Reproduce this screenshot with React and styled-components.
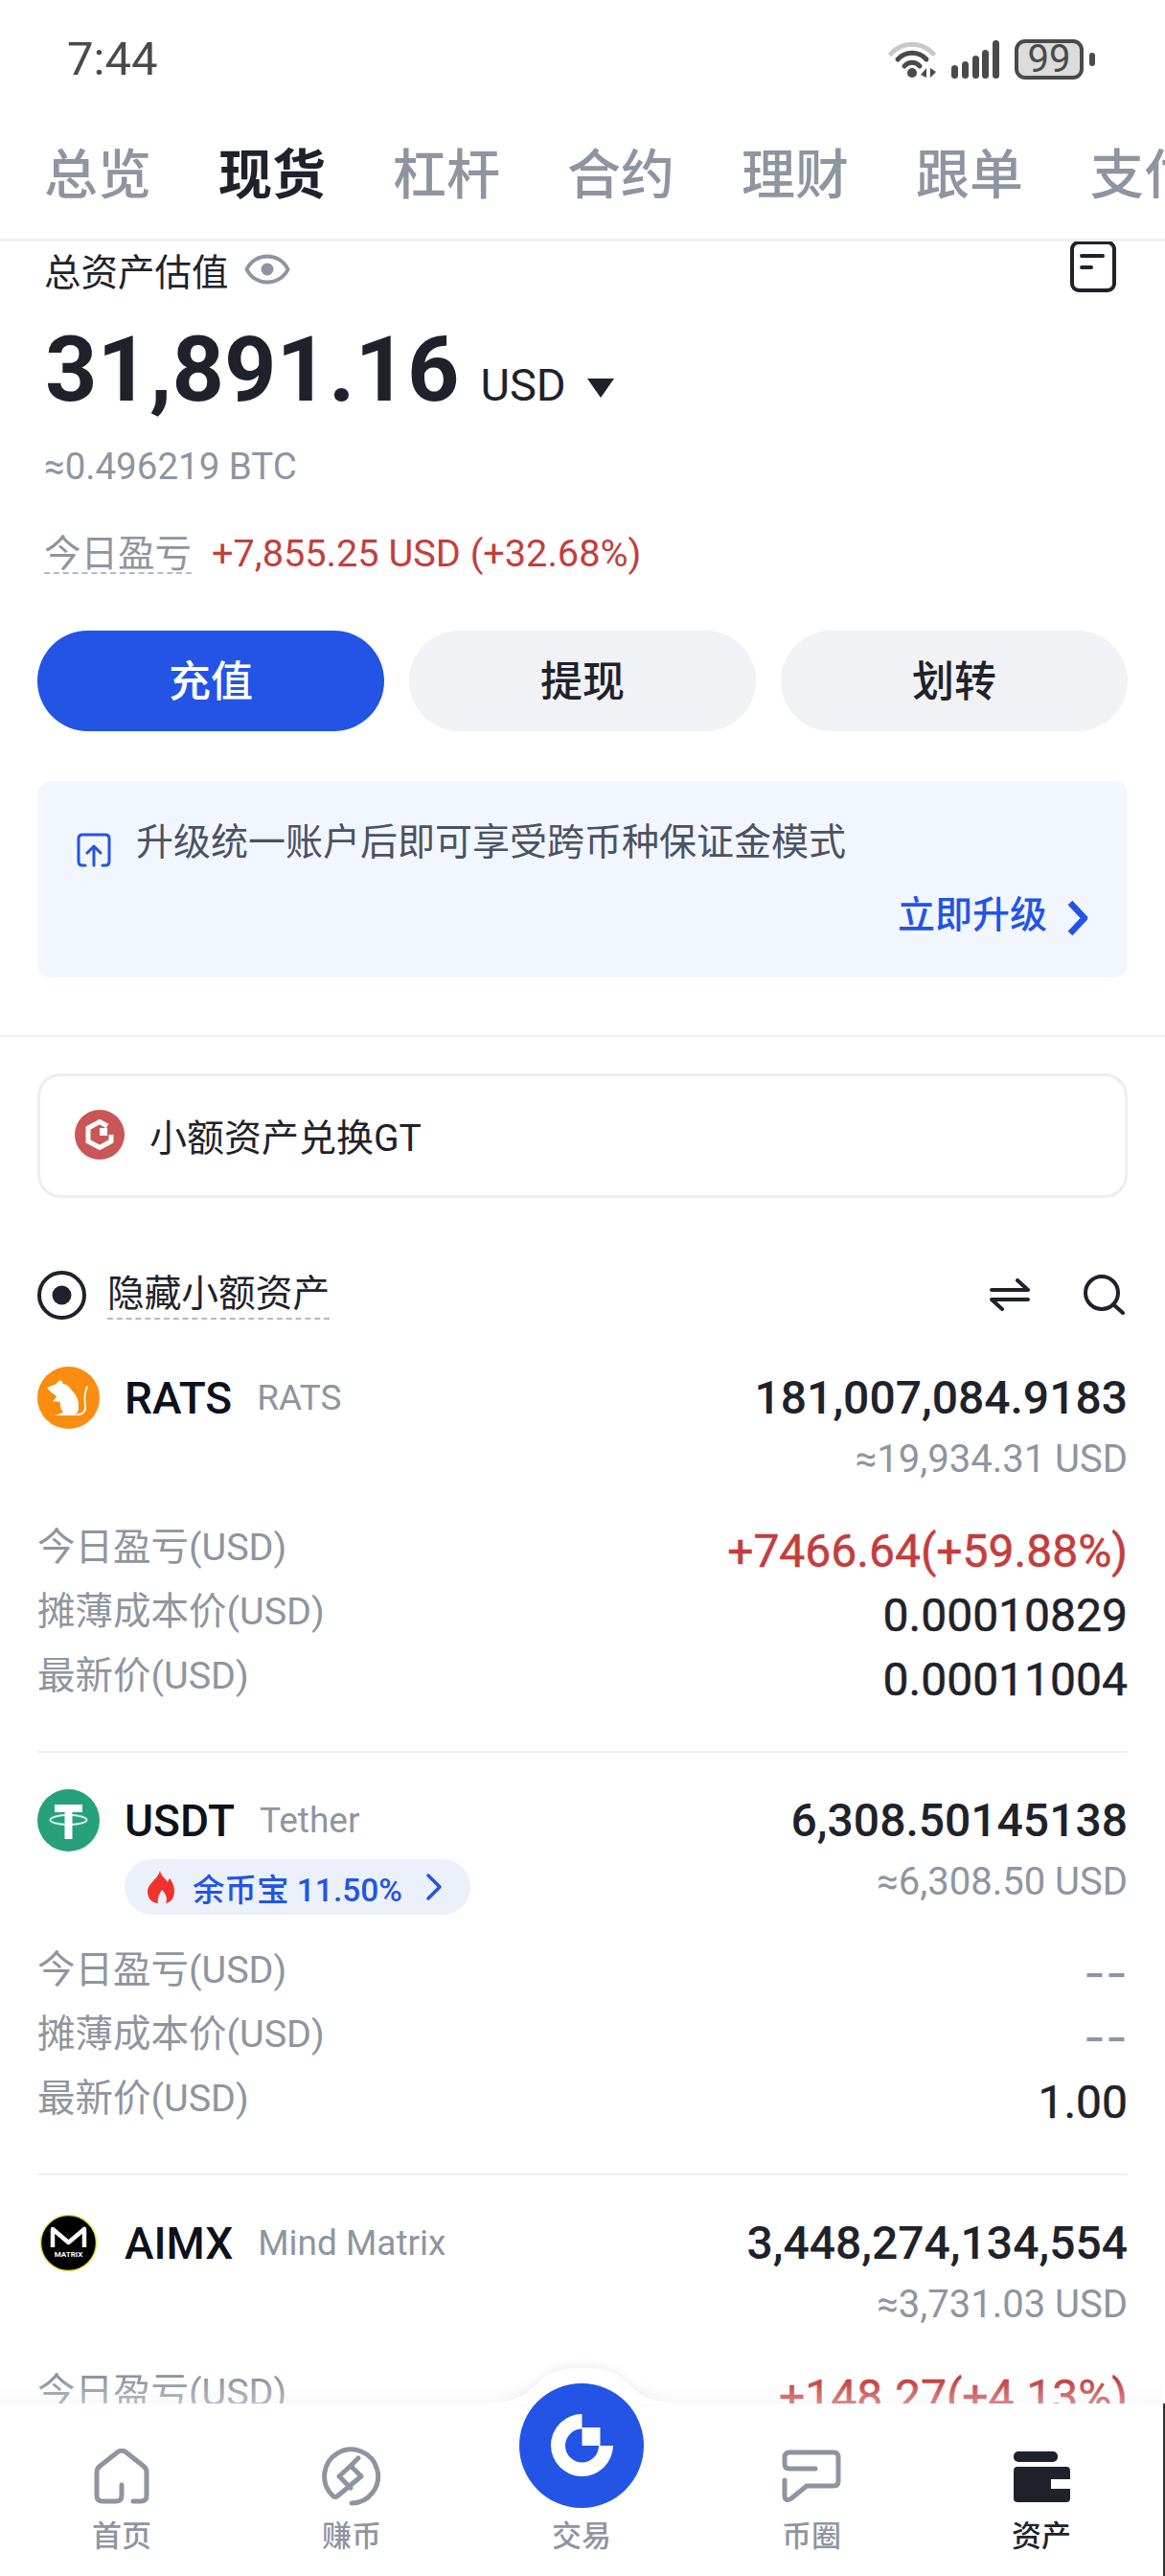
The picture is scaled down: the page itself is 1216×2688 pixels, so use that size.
import React from "react";
import styled, { createGlobalStyle } from "styled-components";

const GlobalStyle = createGlobalStyle`
  html, body { margin: 0; padding: 0; background: #fff; }
  * { box-sizing: border-box; }
  body {
    font-family: Roboto, "Noto Sans CJK SC", sans-serif;
  }
`;

const DARK = "#1f222b";
const GRAY = "#8e95a0";
const RED = "#c43d3d";
const BLUE = "#2354e6";

const Screen = styled.div`
  width: 1216px;
  height: 2688px;
  display: flex;
  flex-direction: column;
  overflow: hidden;
  background: #fff;
`;

const StatusBar = styled.div`
  height: 124px;
  flex-shrink: 0;
  display: flex;
  align-items: center;
  justify-content: space-between;
  padding: 0 85px 0 70px;
  color: #4a4a4a;
`;

const Time = styled.span`
  font-size: 49px;
  line-height: 60px;
`;

const StatusIcons = styled.div`
  display: flex;
  align-items: center;
  gap: 16px;
`;

const Battery = styled.div`
  width: 72px;
  height: 42px;
  border: 4px solid #4a4a4a;
  border-radius: 11px;
  background: #dcdcdc;
  display: flex;
  align-items: center;
  justify-content: center;
  font-size: 40px;
  line-height: 1;
  position: relative;
  &::after {
    content: "";
    position: absolute;
    right: -16px;
    top: 10px;
    width: 6px;
    height: 14px;
    border-radius: 3px;
    background: #4a4a4a;
  }
`;

const Tabs = styled.div`
  height: 128px;
  flex-shrink: 0;
  display: flex;
  gap: 70px;
  padding: 31px 0 0 46px;
  overflow: hidden;
  border-bottom: 3px solid #f0f1f4;
`;

const Tab = styled.span`
  font-size: 56px;
  line-height: 56px;
  flex-shrink: 0;
  color: ${(p) => (p.$active ? DARK : GRAY)};
  font-weight: ${(p) => (p.$active ? 700 : 500)};
`;

const Scroll = styled.div`
  flex: 1;
  min-height: 0;
  overflow: hidden;
`;

const Section = styled.div`
  padding: 0 39px;
`;

const TitleRow = styled.div`
  height: 60px;
  display: flex;
  align-items: center;
  padding-left: 7px;
  font-size: 38.5px;
  color: ${DARK};
  gap: 16px;
  margin-top: -1px;
`;

const DocIcon = styled.svg`
  margin-left: auto;
  margin-right: 12px;
  align-self: flex-start;
`;

const TotalRow = styled.div`
  margin-top: 30px;
  padding-left: 8px;
  height: 90px;
  display: flex;
  align-items: baseline;
  color: ${DARK};
`;

const TotalValue = styled.span`
  font-size: 95px;
  line-height: 90px;
  font-weight: 700;
`;

const TotalUnit = styled.span`
  font-size: 47px;
  margin-left: 22px;
`;

const Caret = styled.span`
  width: 0;
  height: 0;
  margin-left: 22px;
  border-left: 14px solid transparent;
  border-right: 14px solid transparent;
  border-top: 20px solid ${DARK};
  align-self: center;
  transform: translateY(19px);
`;

const Approx = styled.div`
  margin-top: 36px;
  padding-left: 7px;
  font-size: 38.5px;
  line-height: 40px;
  color: ${GRAY};
`;

const PnlRow = styled.div`
  margin-top: 52px;
  padding-left: 7px;
  display: flex;
  gap: 21px;
  font-size: 38.5px;
  line-height: 38px;
`;

const Dashed = styled.span`
  color: ${(p) => p.$color || GRAY};
  border-bottom: 2px dashed #b4b9c4;
`;

const PnlValue = styled.span`
  color: ${RED};
  font-size: 39.7px;
`;

const Actions = styled.div`
  margin-top: 59px;
  display: grid;
  grid-template-columns: repeat(3, 362px);
  gap: 26px;
`;

const ActionButton = styled.div`
  height: 105px;
  padding-bottom: 6px;
  border-radius: 53px;
  display: flex;
  align-items: center;
  justify-content: center;
  font-size: 44px;
  font-weight: 500;
  background: ${(p) => (p.$primary ? BLUE : "#f1f2f6")};
  color: ${(p) => (p.$primary ? "#fff" : DARK)};
`;

const Banner = styled.div`
  margin-top: 52px;
  height: 205px;
  border-radius: 14px;
  background: #f2f6ff;
  padding: 44px 40px 0 41px;
`;

const BannerLine = styled.div`
  display: flex;
  gap: 26px;
  font-size: 39px;
  line-height: 40px;
  color: #4c5262;
  svg {
    margin-top: 10px;
  }
`;

const BannerLink = styled.div`
  margin-top: 27px;
  display: flex;
  justify-content: flex-end;
  align-items: center;
  gap: 19px;
  font-size: 39px;
  line-height: 40px;
  font-weight: 500;
  color: ${BLUE};
  svg {
    margin-top: 6px;
  }
`;

const Divider = styled.div`
  margin-top: 60px;
  height: 2px;
  background: #eeeff3;
`;

const ConvertCard = styled.div`
  margin-top: 38px;
  height: 130px;
  padding-bottom: 2px;
  border: 3px solid #eceef2;
  border-radius: 24px;
  display: flex;
  align-items: center;
  gap: 26px;
  padding-left: 36px;
  font-size: 39px;
  color: ${DARK};
`;

const FilterRow = styled.div`
  margin-top: 75px;
  height: 52px;
  display: flex;
  align-items: center;
  gap: 22px;
  font-size: 38.7px;
  line-height: 50px;
`;

const FilterTools = styled.div`
  margin-left: auto;
  display: flex;
  align-items: center;
  gap: 55px;
  margin-right: 2px;
`;

const AssetList = styled.div`
  margin-top: 11px;
`;

const Asset = styled.div`
  height: 441px;
  padding-top: 38px;
  border-bottom: 2px solid #eeeff3;
`;

const AssetHead = styled.div`
  height: 154px;
  display: flex;
  justify-content: space-between;
`;

const CoinRow = styled.div`
  display: flex;
  align-items: center;
  height: 65px;
  gap: 26px;
`;

const CoinSlot = styled.div`
  width: 65px;
  height: 65px;
  display: flex;
  align-items: center;
  justify-content: center;
`;

const CoinName = styled.span`
  font-size: 46px;
  font-weight: 500;
  color: #0d111c;
`;

const CoinFull = styled.span`
  font-size: 37px;
  color: ${GRAY};
`;

const EarnBadge = styled.div`
  margin: 8px 0 0 91px;
  width: 361px;
  height: 58px;
  border-radius: 29px;
  background: #ecf0fb;
  display: flex;
  align-items: center;
  padding-left: 24px;
  gap: 19px;
  font-size: 33.5px;
  font-weight: 500;
  color: ${BLUE};
`;

const BadgeChevron = styled.svg`
  margin-left: 5px;
`;

const Holding = styled.div`
  display: flex;
  flex-direction: column;
  align-items: flex-end;
`;

const Amount = styled.div`
  font-size: 48px;
  line-height: 65px;
  font-weight: 500;
  color: ${DARK};
`;

const Worth = styled.div`
  margin-top: 12px;
  font-size: 40px;
  line-height: 40px;
  color: ${GRAY};
`;

const StatRow = styled.div`
  height: 67px;
  display: flex;
  align-items: center;
  justify-content: space-between;
`;

const StatLabel = styled.span`
  padding-bottom: 6px;
  font-size: 39.5px;
  color: ${GRAY};
`;

const StatValue = styled.span`
  padding-top: 10px;
  font-size: 48px;
  font-weight: 400;
  -webkit-text-stroke: 0.5px currentColor;
  color: ${(p) => (p.$tone === "up" ? RED : DARK)};
`;

const EmptyValue = styled.span`
  font-family: Inter, sans-serif;
  font-size: 50px;
  line-height: 50px;
  padding-top: 8px;
  color: ${GRAY};
`;

const Nav = styled.nav`
  position: relative;
  height: 180px;
  flex-shrink: 0;
  background: #fff;
  display: grid;
  grid-template-columns: repeat(5, 240px);
  padding: 0 0 0 7px;
  border-right: 2px solid #333;
  &::before {
    content: "";
    position: absolute;
    left: 0;
    right: 0;
    top: -26px;
    height: 26px;
    background: linear-gradient(rgba(240, 242, 247, 0), rgba(240, 242, 247, 0.4));
  }
`;

const Hump = styled.svg`
  position: absolute;
  left: 498px;
  top: -38px;
  z-index: 1;
  overflow: visible;
  filter: drop-shadow(0 -3px 5px rgba(205, 210, 222, 0.35));
`;

const TradeButton = styled.div`
  position: absolute;
  left: 542px;
  top: -21px;
  width: 130px;
  height: 130px;
  border-radius: 50%;
  background: ${BLUE};
  display: flex;
  align-items: center;
  justify-content: center;
  z-index: 2;
`;

const NavItem = styled.div`
  padding-top: 45px;
  display: flex;
  flex-direction: column;
  align-items: center;
  font-size: 31px;
  font-weight: 500;
  line-height: 36px;
  color: ${(p) => (p.$active ? DARK : GRAY)};
`;

const NavIconSlot = styled.div`
  height: 62px;
  margin-bottom: 14px;
  display: flex;
  align-items: center;
  justify-content: center;
`;

const WifiIcon = () => (
  <svg width="50" height="40" viewBox="0 0 50 40" fill="none">
    <path d="M3 14 C15 1 35 1 47 14" stroke="#c9c9c9" strokeWidth="5" strokeLinecap="round" />
    <path d="M10 20 C18 11 32 11 40 20" stroke="#4a4a4a" strokeWidth="5" strokeLinecap="round" />
    <path d="M17 27 C21 22 29 22 33 27" stroke="#4a4a4a" strokeWidth="5" strokeLinecap="round" />
    <circle cx="25" cy="34" r="5" fill="#4a4a4a" />
    <path d="M40 29 V39 L34 36 Z M44 29 L50 33 L44 39 Z" fill="#4a4a4a" />
  </svg>
);

const SignalIcon = () => (
  <svg width="50" height="40" viewBox="0 0 50 40" fill="#4a4a4a">
    <rect x="0" y="26" width="7" height="14" rx="3.5" />
    <rect x="11" y="22" width="7" height="18" rx="3.5" />
    <rect x="22" y="16" width="7" height="24" rx="3.5" />
    <rect x="32" y="10" width="7" height="30" rx="3.5" />
    <rect x="43" y="0" width="7" height="40" rx="3.5" />
  </svg>
);

const EyeIcon = () => (
  <svg width="48" height="34" viewBox="0 0 48 34" fill="none">
    <path d="M2.5 17 C11 -1 37 -1 45.5 17 C37 35 11 35 2.5 17 Z" stroke={GRAY} strokeWidth="4" />
    <circle cx="24" cy="17" r="6.5" fill={GRAY} />
  </svg>
);

const DocGlyph = () => (
  <DocIcon width="48" height="54" viewBox="0 0 48 54" fill="none">
    <rect x="2" y="2" width="44" height="50" rx="7" stroke={DARK} strokeWidth="4" />
    <path d="M12 16 H34 M12 28 H22" stroke={DARK} strokeWidth="4" strokeLinecap="round" />
  </DocIcon>
);

const UpgradeIcon = () => (
  <svg width="36" height="36" viewBox="0 0 36 36" fill="none" stroke={BLUE} strokeWidth="3" strokeLinecap="round" strokeLinejoin="round">
    <path d="M9 34 H6 Q2 34 2 30 V6 Q2 2 6 2 H30 Q34 2 34 6 V30 Q34 34 30 34 H27" />
    <path d="M18 34 V14 M11 21 L18 14 L25 21" />
  </svg>
);

const Chevron = () => (
  <svg width="25" height="40" viewBox="0 0 25 40" fill="none">
    <path d="M5 4 L20 20 L5 36" stroke={BLUE} strokeWidth="6.5" strokeLinejoin="round" />
  </svg>
);

const ConvertIcon = () => (
  <svg width="52" height="52" viewBox="0 0 52 52">
    <circle cx="26" cy="26" r="26" fill="#c95757" />
    <path d="M34 17 L26 12.5 L14 19 V33 L26 39.5 L38 33 V26" fill="none" stroke="#fff" strokeWidth="5" />
    <path d="M26 19 H34 V27 H26 Z" fill="#fff" />
  </svg>
);

const RadioIcon = () => (
  <svg width="51" height="51" viewBox="0 0 51 51" fill="none">
    <circle cx="25.5" cy="25.5" r="23.5" stroke={DARK} strokeWidth="4" />
    <circle cx="25.5" cy="25.5" r="10" fill={DARK} />
  </svg>
);

const SwapIcon = () => (
  <svg width="42" height="34" viewBox="0 0 42 34" fill="none" stroke={DARK} strokeWidth="4" strokeLinecap="round" strokeLinejoin="round">
    <path d="M2 12 H40 L29 2" />
    <path d="M40 22 H2 L13 32" />
  </svg>
);

const SearchIcon = () => (
  <svg width="45" height="42" viewBox="0 0 45 42" fill="none" stroke={DARK} strokeWidth="4" strokeLinecap="round">
    <circle cx="20" cy="19" r="17" />
    <path d="M32 31 L42 40" />
  </svg>
);

const RatsCoin = () => (
  <svg width="65" height="65" viewBox="0 0 65 65">
    <circle cx="32.5" cy="32.5" r="32.5" fill="#fa8c0f" />
    <path
      d="M10 22 L20 18 Q22 13 26 15 Q27 17 26 18 Q32 18 36 25 Q44 32 43 44 Q42 49 39 50 L45 51 L18 51 L27 48 Q23 42 24 37 L16 36 Q19 34 20 31 Q14 27 10 22 Z"
      fill="#fff"
    />
    <path d="M42 50 Q51 50 50 40 Q48 30 52 21" fill="none" stroke="#fff" strokeWidth="1.8" strokeLinecap="round" />
  </svg>
);

const TetherCoin = () => (
  <svg width="65" height="65" viewBox="0 0 65 65">
    <circle cx="32.5" cy="32.5" r="32.5" fill="#26a17b" />
    <path d="M18 16 H47 V24 H36.5 V52 H28.5 V24 H18 Z" fill="#fff" />
    <ellipse cx="32.5" cy="32" rx="19" ry="5" fill="none" stroke="#fff" strokeWidth="2" opacity="0.85" />
  </svg>
);

const MatrixCoin = () => (
  <svg width="59" height="59" viewBox="0 0 59 59">
    <circle cx="29.5" cy="29.5" r="29" fill="#000" stroke="#e8e04a" strokeWidth="1.5" />
    <path d="M13 34 V15 L29.5 29 L46 15 V34" fill="none" stroke="#fff" strokeWidth="4.5" strokeLinejoin="round" />
    <text x="29.5" y="44" textAnchor="middle" fontSize="8" fontWeight="700" fill="#fff" fontFamily="Roboto, sans-serif">
      MATRIX
    </text>
  </svg>
);

const FlameIcon = () => (
  <svg width="28" height="34" viewBox="0 0 28 34">
    <path
      d="M13 0 C14 6 19 8 21 12 Q22 9 23 8 C27 13 28 18 28 22 C28 29 23 34 19 34 C21 30 20 25 15 20 C12 25 10 29 11 34 C5 34 0 29 0 22 C0 13 11 9 13 0 Z"
      fill="#f0322f"
    />
  </svg>
);

const HomeIcon = () => (
  <svg width="58" height="58" viewBox="0 0 58 58" fill="none" stroke={GRAY} strokeWidth="5" strokeLinecap="round" strokeLinejoin="round">
    <path d="M29 38 V49 Q29 55 23 55 H9 Q3 55 3 49 V25 Q3 21 6 18.5 L25 3.5 Q29 1 33 3.5 L52 18.5 Q55 21 55 25 V49 Q55 55 49 55 H41" />
  </svg>
);

const EarnIcon = () => (
  <svg width="62" height="62" viewBox="0 0 62 62" fill="none" stroke={GRAY} strokeWidth="5" strokeLinecap="round" strokeLinejoin="round">
    <path d="M31 59 A28 28 0 1 0 11 51 Q14 54 17 51 L41 31 L30 20 L18 31 L30 43" />
    <path d="M30 20 L38 12" />
  </svg>
);

const CommunityIcon = () => (
  <svg width="63" height="56" viewBox="0 0 63 56" fill="none" stroke={GRAY} strokeWidth="5" strokeLinecap="round" strokeLinejoin="round">
    <path d="M35 20 H8 Q3 20 3 15 V8 Q3 3 8 3 H54 Q59 3 59 8 V33 Q59 38 54 38 H26 L10 51 Q4 55 3 49 V32" />
  </svg>
);

const WalletIcon = () => (
  <svg width="59" height="53" viewBox="0 0 59 53" fill={DARK}>
    <rect x="0" y="0" width="46" height="11" rx="5" />
    <path d="M4 16 H55 Q59 16 59 20 V29 H39 V39 H59 V49 Q59 53 55 53 H4 Q0 53 0 49 V20 Q0 16 4 16 Z" />
  </svg>
);

const GateLogo = () => (
  <svg width="65" height="66" viewBox="0 0 65 66" fill="#fff">
    <path d="M32.5 0 A32.5 32.5 0 1 0 65 33 H50 A17.5 17.5 0 1 1 32.5 15.5 Z" />
    <rect x="32.5" y="14" width="19" height="19" />
  </svg>
);

const assets = [
  {
    symbol: "RATS",
    name: "RATS",
    coin: <RatsCoin />,
    amount: "181,007,084.9183",
    worth: "≈19,934.31 USD",
    stats: [
      ["今日盈亏(USD)", "+7466.64(+59.88%)", "up"],
      ["摊薄成本价(USD)", "0.00010829"],
      ["最新价(USD)", "0.00011004"],
    ],
  },
  {
    symbol: "USDT",
    name: "Tether",
    coin: <TetherCoin />,
    badge: "余币宝 11.50%",
    amount: "6,308.50145138",
    worth: "≈6,308.50 USD",
    stats: [
      ["今日盈亏(USD)", "--"],
      ["摊薄成本价(USD)", "--"],
      ["最新价(USD)", "1.00"],
    ],
  },
  {
    symbol: "AIMX",
    name: "Mind Matrix",
    coin: <MatrixCoin />,
    amount: "3,448,274,134,554",
    worth: "≈3,731.03 USD",
    stats: [["今日盈亏(USD)", "+148.27(+4.13%)", "up"]],
  },
];

const tabs = ["总览", "现货", "杠杆", "合约", "理财", "跟单", "支付"];

export default function App() {
  return (
    <Screen>
      <GlobalStyle />
      <StatusBar>
        <Time>7:44</Time>
        <StatusIcons>
          <WifiIcon />
          <SignalIcon />
          <Battery>99</Battery>
        </StatusIcons>
      </StatusBar>
      <Tabs>
        {tabs.map((t) => (
          <Tab key={t} $active={t === "现货"}>
            {t}
          </Tab>
        ))}
      </Tabs>
      <Scroll>
        <Section>
          <TitleRow>
            总资产估值
            <EyeIcon />
            <DocGlyph />
          </TitleRow>
          <TotalRow>
            <TotalValue>31,891.16</TotalValue>
            <TotalUnit>USD</TotalUnit>
            <Caret />
          </TotalRow>
          <Approx>≈0.496219 BTC</Approx>
          <PnlRow>
            <Dashed>今日盈亏</Dashed>
            <PnlValue>+7,855.25 USD (+32.68%)</PnlValue>
          </PnlRow>
          <Actions>
            <ActionButton $primary>充值</ActionButton>
            <ActionButton>提现</ActionButton>
            <ActionButton>划转</ActionButton>
          </Actions>
          <Banner>
            <BannerLine>
              <UpgradeIcon />
              升级统一账户后即可享受跨币种保证金模式
            </BannerLine>
            <BannerLink>
              立即升级
              <Chevron />
            </BannerLink>
          </Banner>
        </Section>
        <Divider />
        <Section>
          <ConvertCard>
            <ConvertIcon />
            小额资产兑换GT
          </ConvertCard>
          <FilterRow>
            <RadioIcon />
            <Dashed $color={DARK}>隐藏小额资产</Dashed>
            <FilterTools>
              <SwapIcon />
              <SearchIcon />
            </FilterTools>
          </FilterRow>
          <AssetList>
            {assets.map((a) => (
              <Asset key={a.symbol}>
                <AssetHead>
                  <div>
                    <CoinRow>
                      <CoinSlot>{a.coin}</CoinSlot>
                      <CoinName>{a.symbol}</CoinName>
                      <CoinFull>{a.name}</CoinFull>
                    </CoinRow>
                    {a.badge && (
                      <EarnBadge>
                        <FlameIcon />
                        {a.badge}
                        <BadgeChevron width="18" height="30" viewBox="0 0 18 30" fill="none">
                          <path d="M3 3 L15 15 L3 27" stroke={BLUE} strokeWidth="3.5" strokeLinecap="round" strokeLinejoin="round" />
                        </BadgeChevron>
                      </EarnBadge>
                    )}
                  </div>
                  <Holding>
                    <Amount>{a.amount}</Amount>
                    <Worth>{a.worth}</Worth>
                  </Holding>
                </AssetHead>
                {a.stats.map(([label, value, tone]) => (
                  <StatRow key={label}>
                    <StatLabel>{label}</StatLabel>
                    {value === "--" ? <EmptyValue>{value}</EmptyValue> : <StatValue $tone={tone}>{value}</StatValue>}
                  </StatRow>
                ))}
              </Asset>
            ))}
          </AssetList>
        </Section>
      </Scroll>
      <Nav>
        <Hump width="220" height="38" viewBox="0 0 220 38">
          <path d="M0 38 C40 38 50 30 66 14 C78 3 92 1 110 1 C128 1 142 3 154 14 C170 30 180 38 220 38 Z" fill="#fff" />
        </Hump>
        <TradeButton>
          <GateLogo />
        </TradeButton>
        <NavItem>
          <NavIconSlot>
            <HomeIcon />
          </NavIconSlot>
          首页
        </NavItem>
        <NavItem>
          <NavIconSlot>
            <EarnIcon />
          </NavIconSlot>
          赚币
        </NavItem>
        <NavItem>
          <NavIconSlot />
          交易
        </NavItem>
        <NavItem>
          <NavIconSlot>
            <CommunityIcon />
          </NavIconSlot>
          币圈
        </NavItem>
        <NavItem $active>
          <NavIconSlot>
            <WalletIcon />
          </NavIconSlot>
          资产
        </NavItem>
      </Nav>
    </Screen>
  );
}
